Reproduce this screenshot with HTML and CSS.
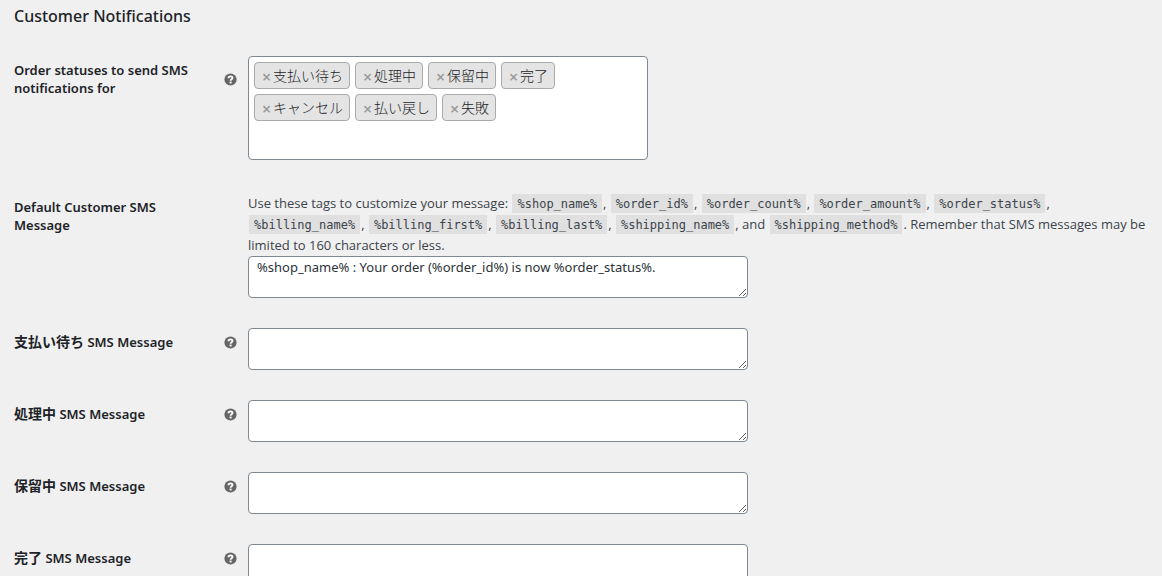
FILE: index.html
```html
<!DOCTYPE html>
<html lang="en">
<head>
<meta charset="utf-8">
<title>Customer Notifications</title>
<link rel="stylesheet" href="styles.css">
</head>
<body>
<svg class="sprite" aria-hidden="true">
  <symbol id="help" viewBox="0 0 13 13">
    <circle cx="6.5" cy="6.5" r="6.1" fill="#666"/>
    <path d="M4.5 5.2C4.5 2.8 8.5 2.8 8.5 5C8.5 6.3 6.6 6.3 6.6 7.8" fill="none" stroke="#fff" stroke-width="1.8"/>
    <rect x="5.6" y="8.6" width="2" height="1.8" fill="#fff"/>
  </symbol>
</svg>
<main class="settings">
  <h2 class="title">Customer Notifications</h2>
  <form class="form">
    <div class="row row-statuses">
      <div class="head"><span class="label" id="statuses">Order statuses to send SMS notifications for</span><svg class="tip" role="img" aria-label="Help"><use href="#help"/></svg></div>
      <div class="field">
        <ul class="choices" aria-labelledby="statuses">
          <li class="choice"><button type="button" class="remove" aria-label="Remove">×</button>支払い待ち</li>
          <li class="choice"><button type="button" class="remove" aria-label="Remove">×</button>処理中</li>
          <li class="choice"><button type="button" class="remove" aria-label="Remove">×</button>保留中</li>
          <li class="choice"><button type="button" class="remove" aria-label="Remove">×</button>完了</li>
          <li class="choice"><button type="button" class="remove" aria-label="Remove">×</button>キャンセル</li>
          <li class="choice"><button type="button" class="remove" aria-label="Remove">×</button>払い戻し</li>
          <li class="choice"><button type="button" class="remove" aria-label="Remove">×</button>失敗</li>
        </ul>
      </div>
    </div>
    <div class="row">
      <div class="head"><label class="label" for="default">Default Customer SMS Message</label></div>
      <div class="field">
        <p class="description">Use these tags to customize your message: <code>%shop_name%</code>, <code>%order_id%</code>, <code>%order_count%</code>, <code>%order_amount%</code>, <code>%order_status%</code>, <code>%billing_name%</code>, <code>%billing_first%</code>, <code>%billing_last%</code>, <code>%shipping_name%</code>, and <code>%shipping_method%</code>. Remember that SMS messages may be limited to 160 characters or less.</p>
        <textarea class="message" id="default">%shop_name% : Your order (%order_id%) is now %order_status%.</textarea>
      </div>
    </div>
    <div class="row">
      <div class="head"><label class="label" for="pending"><span class="ja">支払い待ち</span> SMS Message</label><svg class="tip" role="img" aria-label="Help"><use href="#help"/></svg></div>
      <div class="field"><textarea class="message" id="pending"></textarea></div>
    </div>
    <div class="row">
      <div class="head"><label class="label" for="processing"><span class="ja">処理中</span> SMS Message</label><svg class="tip" role="img" aria-label="Help"><use href="#help"/></svg></div>
      <div class="field"><textarea class="message" id="processing"></textarea></div>
    </div>
    <div class="row">
      <div class="head"><label class="label" for="hold"><span class="ja">保留中</span> SMS Message</label><svg class="tip" role="img" aria-label="Help"><use href="#help"/></svg></div>
      <div class="field"><textarea class="message" id="hold"></textarea></div>
    </div>
    <div class="row">
      <div class="head"><label class="label" for="completed"><span class="ja">完了</span> SMS Message</label><svg class="tip" role="img" aria-label="Help"><use href="#help"/></svg></div>
      <div class="field"><textarea class="message" id="completed"></textarea></div>
    </div>
  </form>
</main>
</body>
</html>
```
FILE: styles.css
```css
* { box-sizing: border-box; }
html { overflow: hidden; }
body {
  margin: 0;
  background: #f0f0f1;
  color: #3c434a;
  font: 13px/21px "Noto Sans", "Noto Sans CJK JP", sans-serif;
}
.sprite { position: absolute; width: 0; height: 0; }
.settings { padding: 4px 14px 0; }
.title {
  margin: 0;
  color: #1d2327;
  font-size: 16px;
  font-weight: 500;
  line-height: 24px;
}
.form {
  display: flex;
  flex-direction: column;
  gap: 30px;
  padding-top: 28px;
}
.row {
  display: grid;
  grid-template-columns: 223px minmax(0, 1fr);
  column-gap: 11px;
  align-items: start;
}
.row-statuses { padding-bottom: 3px; }
.head {
  display: flex;
  align-items: center;
  justify-content: space-between;
  gap: 24px;
  padding-top: 5px;
}
.label {
  flex: 0 1 186px;
  color: #1d2327;
  font-weight: 600;
  line-height: 18px;
}
.ja { font-size: 14px; }
.tip { flex: none; width: 13px; height: 13px; }
.choices {
  display: flex;
  flex-wrap: wrap;
  align-content: flex-start;
  gap: 5px;
  max-width: 400px;
  min-height: 104px;
  margin: 0;
  padding: 5px;
  list-style: none;
  background: #fff;
  border: 1px solid #7e8993;
  border-radius: 4px;
}
.choice {
  display: flex;
  align-items: center;
  gap: 2px;
  height: 27px;
  padding: 0 6px 0 7px;
  background: #e4e4e4;
  border: 1px solid #aaa;
  border-radius: 4px;
  color: #1d2327;
  font-size: 14px;
  font-weight: 300;
}
.remove {
  display: flex;
  justify-content: center;
  width: 9px;
  padding: 2px 0 0;
  border: 0;
  background: none;
  color: #999;
  font: 600 16px/20px "Open Sans", sans-serif;
}
.description {
  margin: 0;
  font-family: "Open Sans", sans-serif;
}
code {
  margin: 0 1px;
  padding: 3px 5px 2px;
  background: #e0e0e1;
  font: 12px "DejaVu Sans Mono", monospace;
}
.message {
  display: block;
  width: 100%;
  max-width: 500px;
  height: 42px;
  padding: 0 8px;
  background: #fff;
  border: 1px solid #7e8993;
  border-radius: 4px;
  color: #2c3338;
  font: inherit;
  overflow: auto;
}
```
